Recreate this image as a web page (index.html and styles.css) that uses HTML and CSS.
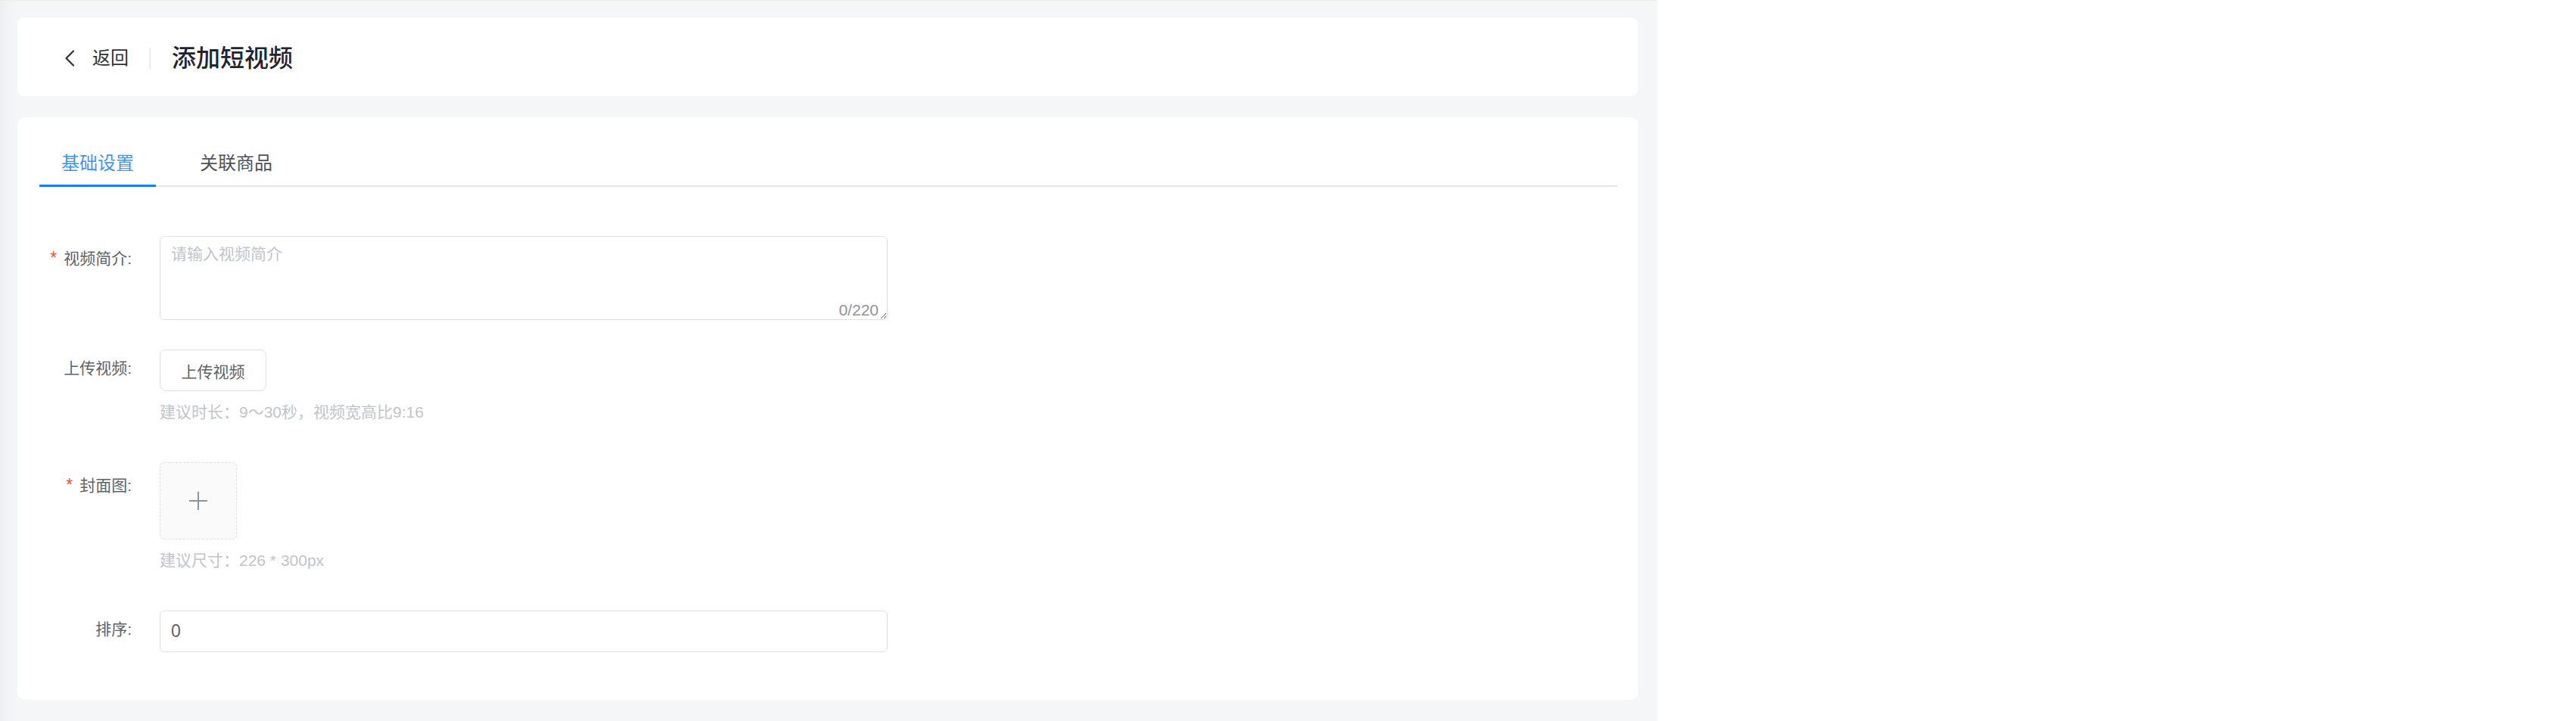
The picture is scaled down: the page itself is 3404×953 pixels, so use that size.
FILE: index.html
```html
<!DOCTYPE html>
<html lang="zh-CN">
<head>
<meta charset="utf-8">
<title>添加短视频</title>
<link rel="stylesheet" href="styles.css">
</head>
<body>
<div class="page">
  <div class="header-card">
    <div class="back">
      <svg class="chev" width="14" height="22" viewBox="0 0 14 22"><path d="M12 1.5 L2.5 11 L12 20.5" fill="none" stroke="#303133" stroke-width="2.2" stroke-linecap="round" stroke-linejoin="round"/></svg>
      <span>返回</span>
    </div>
    <div class="divider"></div>
    <div class="title">添加短视频</div>
  </div>

  <div class="main-card">
    <div class="tabs">
      <div class="tab active">基础设置</div>
      <div class="tab">关联商品</div>
    </div>

    <div class="form">
      <div class="form-item">
        <div class="label label-ta"><span class="star">*</span>视频简介:</div>
        <div class="control">
          <div class="textarea-wrap">
            <textarea class="textarea" placeholder="请输入视频简介"></textarea>
            <span class="count">0/220</span>
          </div>
        </div>
      </div>

      <div class="form-item">
        <div class="label">上传视频:</div>
        <div class="control">
          <button class="btn">上传视频</button>
          <div class="hint">建议时长：9～30秒，视频宽高比9:16</div>
        </div>
      </div>

      <div class="form-item">
        <div class="label label-cover"><span class="star">*</span>封面图:</div>
        <div class="control">
          <div class="uploader">
            <svg width="26" height="26" viewBox="0 0 26 26"><path d="M13 1 V25 M1 13 H25" stroke="#8c939d" stroke-width="2" fill="none"/></svg>
          </div>
          <div class="hint">建议尺寸：226 * 300px</div>
        </div>
      </div>

      <div class="form-item">
        <div class="label">排序:</div>
        <div class="control">
          <input class="input" type="text" value="0">
        </div>
      </div>
    </div>
  </div>
</div>
</body>
</html>
```

FILE: styles.css
```css
html, body {
  margin: 0;
  padding: 0;
  background: #ffffff;
}

body {
  font-family: "Liberation Sans", "Noto Sans CJK SC", sans-serif;
  color: #303133;
}

.page {
  width: 2190px;
  min-height: 953px;
  box-sizing: border-box;
  padding: 22px 25px 28px 23px;
  border-top: 1px solid #efece7;
  background: linear-gradient(to right, #eceef1 0, #f4f6f8 22px, #f4f6f8 100%);
}

.header-card {
  height: 104px;
  box-sizing: border-box;
  padding: 3px 0 0 62px;
  background: #ffffff;
  border-radius: 10px;
  display: flex;
  align-items: center;
}

.back {
  display: flex;
  align-items: center;
  gap: 23px;
  font-size: 24px;
  line-height: 32px;
  color: #303133;
}

.chev {
  display: block;
}

.divider {
  width: 2px;
  height: 28px;
  background: #ececec;
  margin: 0 28px 0 27px;
}

.title {
  font-size: 32px;
  line-height: 40px;
  font-weight: 500;
  color: #1f2433;
}

.main-card {
  margin-top: 28px;
  background: #ffffff;
  border-radius: 10px;
  padding: 29px 28px 24px 29px;
}

.tabs {
  display: flex;
  align-items: flex-start;
  gap: 29px;
  border-bottom: 2px solid #e4e7ed;
}

.tab {
  height: 57px;
  padding: 3px 29px 0;
  line-height: 57px;
  font-size: 24px;
  color: #4e5258;
}

.tab.active {
  color: #3f95f2;
  border-bottom: 3px solid #1a7ff5;
  margin-bottom: -2px;
}

.form {
  margin-top: 65px;
}

.form-item {
  display: flex;
  margin-bottom: 39px;
}

.label {
  width: 159px;
  flex-shrink: 0;
  box-sizing: border-box;
  padding: 1px 37px 0 0;
  text-align: right;
  font-size: 21px;
  line-height: 48px;
  color: #606266;
}

.label-ta {
  padding-top: 5px;
}

.label-cover {
  padding-top: 6px;
}

.star {
  color: #f5532d;
  font-size: 23px;
  margin-right: 9px;
}

.control {
  display: flex;
  flex-direction: column;
  align-items: flex-start;
}

.textarea-wrap {
  position: relative;
  width: 962px;
  height: 111px;
}

.textarea {
  display: block;
  width: 962px;
  height: 111px;
  box-sizing: border-box;
  margin: 0;
  padding: 7px 14px;
  border: 1px solid #dcdfe6;
  border-radius: 6px;
  font-family: "Liberation Sans", "Noto Sans CJK SC", sans-serif;
  font-size: 21px;
  line-height: 31px;
  color: #606266;
  resize: vertical;
  outline: none;
}

.textarea::placeholder {
  color: #c0c4cc;
}

.count {
  position: absolute;
  right: 12px;
  bottom: 3px;
  font-size: 21px;
  line-height: 21px;
  color: #909399;
}

.btn {
  width: 141px;
  height: 55px;
  box-sizing: border-box;
  padding: 0;
  border: 1px solid #dcdfe6;
  border-radius: 8px;
  background: #ffffff;
  font-family: "Liberation Sans", "Noto Sans CJK SC", sans-serif;
  font-size: 21px;
  color: #606266;
}

.hint {
  margin: 12px 0 11px;
  font-size: 21px;
  line-height: 32px;
  color: #c0c4cc;
}

.uploader {
  width: 102px;
  height: 102px;
  box-sizing: border-box;
  border: 1px dashed #dedede;
  border-radius: 6px;
  background: #fafafa;
  display: flex;
  align-items: center;
  justify-content: center;
}

.input {
  width: 962px;
  height: 55px;
  box-sizing: border-box;
  margin: 0;
  padding: 0 14px;
  border: 1px solid #dcdfe6;
  border-radius: 6px;
  font-family: "Liberation Sans", "Noto Sans CJK SC", sans-serif;
  font-size: 23px;
  color: #606266;
  outline: none;
}
```
